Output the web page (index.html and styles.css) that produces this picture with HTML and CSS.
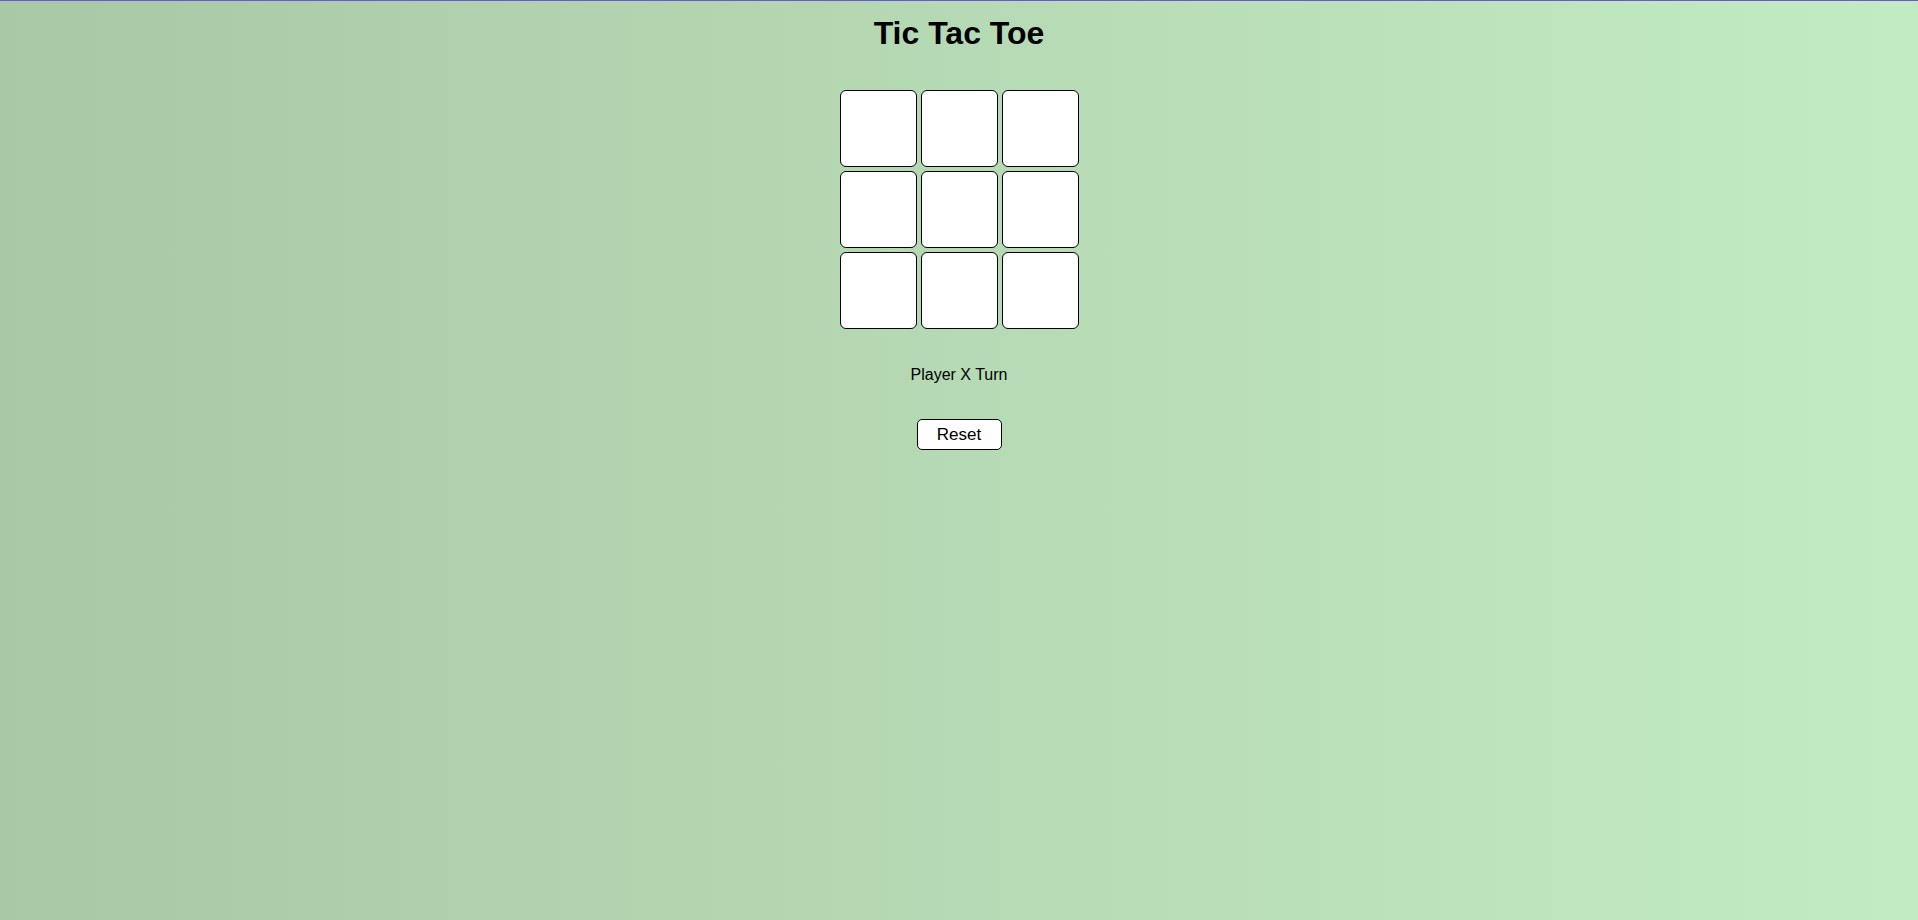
FILE: index.html
```html
<!DOCTYPE html>
<html lang="en">
<head>
<meta charset="utf-8">
<title>Tic Tac Toe</title>
<link rel="stylesheet" href="styles.css">
</head>
<body>
<main class="game">
  <h1 class="title">Tic Tac Toe</h1>
  <div class="board">
    <div class="cell"></div>
    <div class="cell"></div>
    <div class="cell"></div>
    <div class="cell"></div>
    <div class="cell"></div>
    <div class="cell"></div>
    <div class="cell"></div>
    <div class="cell"></div>
    <div class="cell"></div>
  </div>
  <p class="status">Player X Turn</p>
  <button class="reset" type="button">Reset</button>
</main>
</body>
</html>
```

FILE: styles.css
```css
html, body {
  margin: 0;
  padding: 0;
}

body {
  min-height: 100vh;
  box-sizing: border-box;
  border-top: 1px solid #6a5acd;
  background: linear-gradient(to right, #a9c8a5, #c2ebc3);
  font-family: "Liberation Sans", Arial, sans-serif;
  color: #000;
}

.game {
  display: flex;
  flex-direction: column;
  align-items: center;
}

.title {
  margin: 14px 0 0;
  font-size: 32px;
  font-weight: bold;
  line-height: 37px;
}

.board {
  margin-top: 38px;
  display: grid;
  grid-template-columns: repeat(3, 77px);
  grid-auto-rows: 77px;
  gap: 4px;
}

.cell {
  box-sizing: border-box;
  background: #fff;
  border: 1px solid #000;
  border-radius: 6px;
}

.status {
  margin: 37px 0 0;
  font-size: 16px;
  line-height: 18px;
}

.reset {
  margin-top: 35px;
  box-sizing: border-box;
  width: 85px;
  height: 31px;
  padding: 0;
  background: #fff;
  border: 1px solid #000;
  border-radius: 5px;
  font-family: "Liberation Sans", Arial, sans-serif;
  font-size: 17px;
  color: #000;
}
```
